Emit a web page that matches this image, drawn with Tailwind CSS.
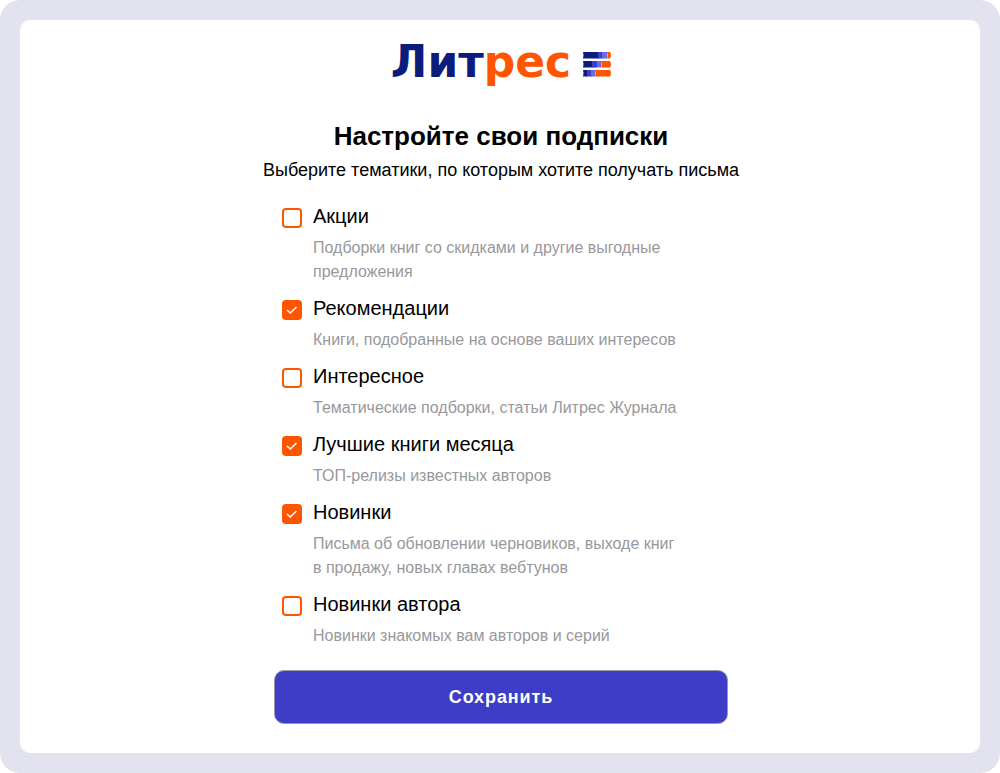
<!DOCTYPE html>
<html lang="ru">
<head>
    <meta charset="UTF-8">
    <meta name="viewport" content="width=device-width, initial-scale=1.0">
    <title>Настройте свои подписки</title>
    <script src="https://cdn.jsdelivr.net/npm/@tailwindcss/browser@4"></script>
</head>
<body class="bg-white text-black font-['Liberation_Sans',Arial,sans-serif]">
    <div class="min-h-screen flex bg-[#e3e3ef] rounded-[20px] p-5">
        <main class="flex-1 bg-white rounded-[10px] pl-4 pr-3.5 pt-5 pb-6 flex flex-col items-center">

            <!-- Логотип -->
            <a href="#" class="flex items-start gap-3 h-12 font-['DejaVu_Sans',sans-serif] font-bold text-[44px] leading-11 text-[#0b1c7a]">
                <span>Лит<span class="text-[#ff5500]">рес</span></span>
                <svg class="mt-3" width="28" height="25" viewBox="0 0 28 25" aria-hidden="true">
                    <path fill="#0b1c7a" d="M0 0h16v6.500H0q1.200-3.200 0-6.500zM0 9h10v6.500H0q1.200-3.200 0-6.500zM0 18h5v6.500H0q1.200-3.200 0-6.500z"/>
                    <path fill="#3d3dc7" d="M15 0h5v6.500h-5zM9 9h5v6.500h-5zM4 18h5v6.500H4z"/>
                    <path fill="#6c6ce0" d="M19 0h5v6.500h-5zM14 9h4v6.500h-4zM8 18h4v6.500H8z"/>
                    <path fill="#ff5500" d="M24 0h3q2 3.200 0 6.500h-3q1-3.200 0-6.500zM18 9h9q2 3.200 0 6.500h-9q1-3.200 0-6.500zM12 18h15q2 3.200 0 6.500H12q1-3.200 0-6.500z"/>
                </svg>
            </a>

            <h1 class="mt-8 text-[26px] leading-8 font-bold text-center">Настройте свои подписки</h1>
            <p class="mt-1 text-lg leading-7 text-center">Выберите тематики, по которым хотите получать письма</p>

            <form class="w-full max-w-[454px] mt-5">
                <div class="flex flex-col gap-3 px-2">
                    <div class="flex gap-[11px]">
                        <div class="relative shrink-0 mt-1 size-5">
                            <input id="sale" type="checkbox" class="peer block appearance-none size-5 rounded-sm border-2 border-[#ff5500] checked:bg-[#ff5500]">
                            <svg class="hidden peer-checked:block absolute inset-0 pointer-events-none" width="20" height="20" fill="none" stroke="#fff" stroke-width="1.6"><path d="M5 10l3.300 3 6.200-6"/></svg>
                        </div>
                        <div>
                            <label for="sale" class="block text-xl leading-6">Акции</label>
                            <p class="mt-2 text-base leading-6 text-[#99989b]">Подборки книг со скидками и другие выгодные<br>предложения</p>
                        </div>
                    </div>
                    <div class="flex gap-[11px]">
                        <div class="relative shrink-0 mt-1 size-5">
                            <input id="recommend" type="checkbox" checked class="peer block appearance-none size-5 rounded-sm border-2 border-[#ff5500] checked:bg-[#ff5500]">
                            <svg class="hidden peer-checked:block absolute inset-0 pointer-events-none" width="20" height="20" fill="none" stroke="#fff" stroke-width="1.6"><path d="M5 10l3.300 3 6.200-6"/></svg>
                        </div>
                        <div>
                            <label for="recommend" class="block text-xl leading-6">Рекомендации</label>
                            <p class="mt-2 text-base leading-6 text-[#99989b]">Книги, подобранные на основе ваших интересов</p>
                        </div>
                    </div>
                    <div class="flex gap-[11px]">
                        <div class="relative shrink-0 mt-1 size-5">
                            <input id="interesting" type="checkbox" class="peer block appearance-none size-5 rounded-sm border-2 border-[#ff5500] checked:bg-[#ff5500]">
                            <svg class="hidden peer-checked:block absolute inset-0 pointer-events-none" width="20" height="20" fill="none" stroke="#fff" stroke-width="1.6"><path d="M5 10l3.300 3 6.200-6"/></svg>
                        </div>
                        <div>
                            <label for="interesting" class="block text-xl leading-6">Интересное</label>
                            <p class="mt-2 text-base leading-6 text-[#99989b]">Тематические подборки, статьи Литрес Журнала</p>
                        </div>
                    </div>
                    <div class="flex gap-[11px]">
                        <div class="relative shrink-0 mt-1 size-5">
                            <input id="best" type="checkbox" checked class="peer block appearance-none size-5 rounded-sm border-2 border-[#ff5500] checked:bg-[#ff5500]">
                            <svg class="hidden peer-checked:block absolute inset-0 pointer-events-none" width="20" height="20" fill="none" stroke="#fff" stroke-width="1.6"><path d="M5 10l3.300 3 6.200-6"/></svg>
                        </div>
                        <div>
                            <label for="best" class="block text-xl leading-6">Лучшие книги месяца</label>
                            <p class="mt-2 text-base leading-6 text-[#99989b]">ТОП-релизы известных авторов</p>
                        </div>
                    </div>
                    <div class="flex gap-[11px]">
                        <div class="relative shrink-0 mt-1 size-5">
                            <input id="new" type="checkbox" checked class="peer block appearance-none size-5 rounded-sm border-2 border-[#ff5500] checked:bg-[#ff5500]">
                            <svg class="hidden peer-checked:block absolute inset-0 pointer-events-none" width="20" height="20" fill="none" stroke="#fff" stroke-width="1.6"><path d="M5 10l3.300 3 6.200-6"/></svg>
                        </div>
                        <div>
                            <label for="new" class="block text-xl leading-6">Новинки</label>
                            <p class="mt-2 text-base leading-6 text-[#99989b]">Письма об обновлении черновиков, выходе книг<br>в продажу, новых главах вебтунов</p>
                        </div>
                    </div>
                    <div class="flex gap-[11px]">
                        <div class="relative shrink-0 mt-1 size-5">
                            <input id="author" type="checkbox" class="peer block appearance-none size-5 rounded-sm border-2 border-[#ff5500] checked:bg-[#ff5500]">
                            <svg class="hidden peer-checked:block absolute inset-0 pointer-events-none" width="20" height="20" fill="none" stroke="#fff" stroke-width="1.6"><path d="M5 10l3.300 3 6.200-6"/></svg>
                        </div>
                        <div>
                            <label for="author" class="block text-xl leading-6">Новинки автора</label>
                            <p class="mt-2 text-base leading-6 text-[#99989b]">Новинки знакомых вам авторов и серий</p>
                        </div>
                    </div>
                </div>

                <button type="submit" class="mt-[22px] w-full py-3 rounded-[10px] border border-[#9999a8] bg-[#3d3dc7] text-white text-lg leading-7 font-bold tracking-wider">Сохранить</button>
            </form>
        </main>
    </div>
</body>
</html>
